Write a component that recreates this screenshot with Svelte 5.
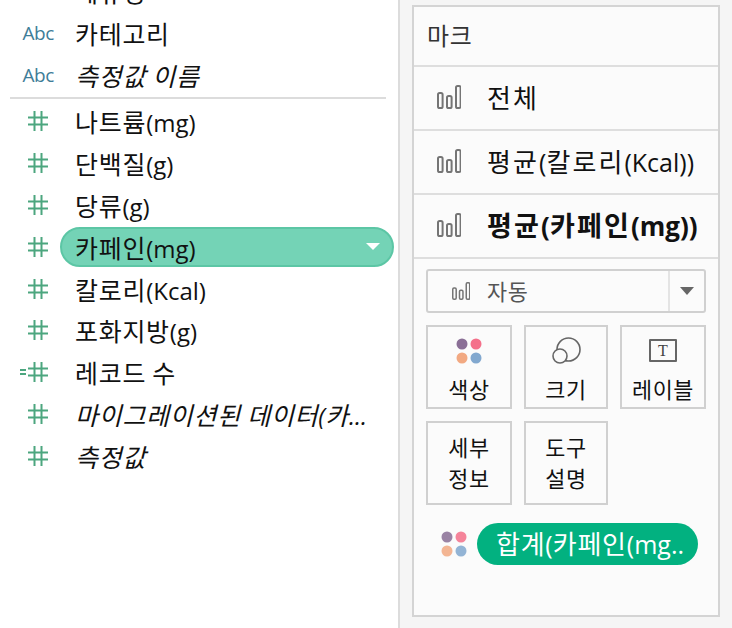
<script>
  const fields = [
    { icon: "abc", label: "카테고리" },
    { icon: "abc", label: "측정값 이름", italic: true },
    { divider: true },
    { icon: "num", label: "나트륨(mg)" },
    { icon: "num", label: "단백질(g)" },
    { icon: "num", label: "당류(g)" },
    { icon: "num", label: "카페인(mg)", selected: true },
    { icon: "num", label: "칼로리(Kcal)" },
    { icon: "num", label: "포화지방(g)" },
    { icon: "calc", label: "레코드 수" },
    { icon: "num", label: "마이그레이션된 데이터(카...", italic: true },
    { icon: "num", label: "측정값", italic: true },
  ];

  const markRows = [
    { label: "전체" },
    { label: "평균(칼로리(Kcal))" },
    { label: "평균(카페인(mg))", bold: true },
  ];

  // hangul is set a bit larger than the latin next to it
  function runs(text) {
    return text.split(/([가-힣]+)/).filter(Boolean);
  }
</script>

{#snippet txt(text)}{#each runs(text) as r}{#if /[가-힣]/.test(r)}<span class="ko">{r}</span>{:else}{r}{/if}{/each}{/snippet}

{#snippet bars(w, h)}
  <svg class="bars" width={w} height={h} viewBox="0 0 24 24" fill="none" stroke="#757575" stroke-width="2">
    <rect x="1" y="8" width="4.6" height="15" rx="1.6" />
    <rect x="10" y="11" width="4.6" height="12" rx="1.6" />
    <rect x="19" y="1" width="4.6" height="22" rx="1.6" />
  </svg>
{/snippet}

{#snippet dots(cls)}
  <svg class={cls} width="26" height="26" viewBox="0 0 26 26">
    <circle cx="6" cy="6" r="5.5" fill="#8a6f96" />
    <circle cx="20" cy="6" r="5.5" fill="#f4708a" />
    <circle cx="6" cy="20" r="5.5" fill="#f2a982" />
    <circle cx="20" cy="20" r="5.5" fill="#82a8cf" />
  </svg>
{/snippet}

{#snippet hash()}
  <svg width="20" height="20" viewBox="0 0 20 20" stroke="#4ca67f" stroke-width="2" fill="none">
    <path d="M6.5 0v20M13.5 0v20M0 6.5h20M0 13.5h20" />
  </svg>
{/snippet}

<div class="page">
  <aside class="fields">
    <div class="cut">메뉴명</div>
    {#each fields as f}
      {#if f.divider}
        <div class="rule"></div>
      {:else}
        <div class="row">
          <span class="type">
            {#if f.icon === "abc"}
              <span class="abc">Abc</span>
            {:else}
              {#if f.icon === "calc"}<span class="eq"></span>{/if}
              {@render hash()}
            {/if}
          </span>
          <span class="name" class:italic={f.italic} class:pill={f.selected}>
            <span>{@render txt(f.label)}</span>
            {#if f.selected}<span class="caret"></span>{/if}
          </span>
        </div>
      {/if}
    {/each}
  </aside>

  <main class="side">
    <section class="card">
      <div class="title">{@render txt("마크")}</div>
      {#each markRows as m}
        <div class="mark-row" class:bold={m.bold}>
          {@render bars(24, 24)}
          <span>{@render txt(m.label)}</span>
        </div>
      {/each}

      <div class="body">
        <div class="select">
          <div class="select-value">
            {@render bars(18, 18)}
            <span class="select-text">{@render txt("자동")}</span>
          </div>
          <div class="select-arrow"><span></span></div>
        </div>

        <div class="tiles">
          <div class="tile">
            <div class="slot">{@render dots("color-dots")}</div>
            <span>{@render txt("색상")}</span>
          </div>
          <div class="tile">
            <div class="slot">
              <svg width="29" height="27" viewBox="0 0 29 27" fill="#fafafa" stroke="#666" stroke-width="1.6">
                <circle cx="16.5" cy="12.5" r="11.5" />
                <circle cx="8" cy="19" r="7" />
              </svg>
            </div>
            <span>{@render txt("크기")}</span>
          </div>
          <div class="tile">
            <div class="slot"><div class="t-box">T</div></div>
            <span>{@render txt("레이블")}</span>
          </div>
          <div class="tile two">{@render txt("세부")}<br />{@render txt("정보")}</div>
          <div class="tile two">{@render txt("도구")}<br />{@render txt("설명")}</div>
        </div>

        <div class="encoding">
          {@render dots("enc-dots")}
          <div class="enc-pill">{@render txt("합계(카페인(mg..")}</div>
        </div>
      </div>
    </section>
  </main>
</div>

<style>
  :global(body) {
    margin: 0;
    background: #fff;
  }

  .page {
    display: flex;
    width: 732px;
    height: 628px;
    overflow: hidden;
    font-family: "Open Sans", "Noto Sans CJK KR", sans-serif;
    font-size: 24px;
    color: #111;
  }

  .ko {
    font-family: "Noto Sans CJK KR", sans-serif;
    font-size: 1.04em;
    letter-spacing: 0.03em;
  }

  .fields {
    width: 400px;
    flex-shrink: 0;
    box-sizing: border-box;
    border-right: 2px solid #dcdcdc;
    margin-top: -30px;
  }

  .cut {
    height: 42px;
    line-height: 42px;
    padding-left: 75px;
    font-family: "Noto Sans CJK KR", sans-serif;
    font-size: 25px;
    letter-spacing: 0.03em;
  }

  .row {
    display: flex;
    align-items: center;
    height: 41.8px;
  }

  .type {
    display: flex;
    align-items: center;
    justify-content: flex-end;
    gap: 2px;
    width: 48px;
    margin-right: 27px;
    flex-shrink: 0;
  }

  .abc {
    font-size: 19px;
    color: #3f7d98;
    margin-right: -6px;
    letter-spacing: -0.4px;
  }

  .eq {
    width: 6px;
    height: 6px;
    box-sizing: border-box;
    border-top: 2px solid #4ca67f;
    border-bottom: 2px solid #4ca67f;
  }

  .name {
    white-space: nowrap;
  }

  .italic {
    font-style: italic;
  }

  .pill {
    display: flex;
    align-items: center;
    justify-content: space-between;
    box-sizing: border-box;
    width: 334px;
    height: 40px;
    margin-left: -15px;
    padding: 0 12px 0 13px;
    background: #74d3b6;
    border: 2px solid #5cc6a5;
    border-radius: 20px;
  }

  .caret {
    width: 0;
    height: 0;
    border-left: 7px solid transparent;
    border-right: 7px solid transparent;
    border-top: 7px solid #fff;
  }

  .rule {
    height: 2px;
    background: #dcdcdc;
    margin: 1px 12px 2px 10px;
  }

  .side {
    flex: 1;
    box-sizing: border-box;
    padding: 5px 12px 11px 12px;
    background: #f5f5f5;
  }

  .card {
    height: 100%;
    box-sizing: border-box;
    background: #fbfbfb;
    border: 2px solid #d4d4d4;
  }

  .title {
    height: 58px;
    line-height: 56px;
    padding-left: 13px;
    font-size: 23px;
    color: #333;
    border-bottom: 2px solid #dedede;
  }

  .mark-row {
    display: flex;
    align-items: center;
    gap: 26px;
    height: 64px;
    box-sizing: border-box;
    padding: 0 0 3px 23px;
    font-size: 25px;
    border-bottom: 2px solid #dedede;
    white-space: nowrap;
  }

  .mark-row .ko {
    letter-spacing: 0.08em;
  }

  .mark-row.bold {
    font-size: 26px;
    font-weight: 700;
  }

  .body {
    padding: 10px 12px 0 12px;
  }

  .select {
    display: flex;
    height: 44px;
    box-sizing: border-box;
    border: 2px solid #d0d0d0;
    border-radius: 3px;
  }

  .select-value {
    flex: 1;
    display: flex;
    align-items: center;
    gap: 17px;
    padding-left: 24px;
    font-size: 21px;
    color: #555;
    border-right: 2px solid #e4e4e4;
  }

  .select-text {
    margin-top: -2px;
  }

  .select-arrow {
    width: 34px;
    display: flex;
    align-items: center;
    justify-content: center;
  }

  .select-arrow span {
    border-left: 7px solid transparent;
    border-right: 7px solid transparent;
    border-top: 8px solid #666;
  }

  .tiles {
    display: grid;
    grid-template-columns: 86px 84px 86px;
    grid-auto-rows: 84px;
    gap: 12px;
    margin-top: 12px;
  }

  .tile {
    display: flex;
    flex-direction: column;
    align-items: center;
    padding-top: 10px;
    box-sizing: border-box;
    border: 2px solid #d0d0d0;
    font-size: 21px;
    line-height: 30px;
    text-align: center;
  }

  .slot {
    height: 27px;
    margin-bottom: 10px;
    display: flex;
    align-items: center;
    justify-content: center;
  }

  .t-box {
    width: 24px;
    height: 19px;
    border: 2px solid #666;
    border-radius: 1px;
    font-family: "Liberation Serif", serif;
    font-size: 16px;
    line-height: 19px;
    color: #444;
  }

  .tile.two {
    display: block;
    padding: 9px 0 0;
    line-height: 29px;
  }

  .encoding {
    display: flex;
    align-items: center;
    gap: 10px;
    margin-top: 18px;
    padding-left: 15px;
  }

  .encoding :global(.enc-dots) {
    opacity: 0.85;
  }

  .enc-pill {
    width: 221px;
    height: 42px;
    line-height: 40px;
    box-sizing: border-box;
    padding-left: 5px;
    border-radius: 21px;
    background: #02b180;
    color: #fff;
    font-size: 25px;
    text-align: center;
    white-space: nowrap;
  }
</style>
